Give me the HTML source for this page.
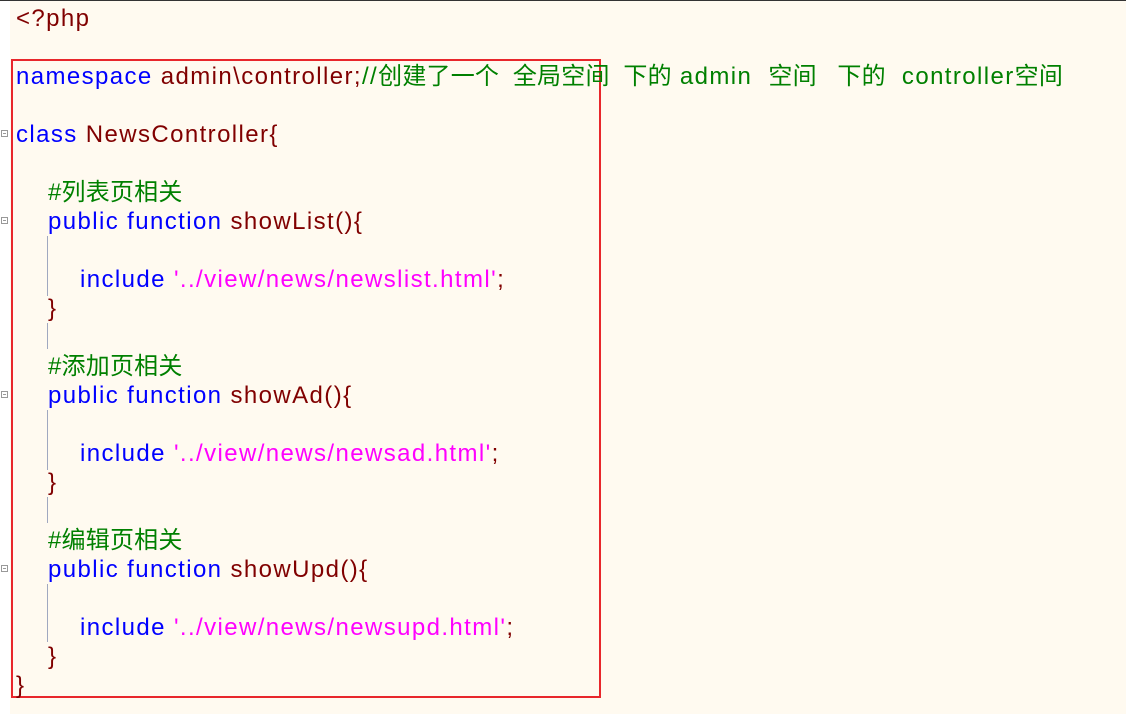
<!DOCTYPE html>
<html><head><meta charset="utf-8"><style>
body{margin:0;width:1126px;height:714px;overflow:hidden;background:#fffaf0;position:relative;font-family:"Liberation Sans","Noto Sans CJK SC",sans-serif;font-size:24px}
.g{position:absolute;left:0;top:0;width:10px;height:714px;background:#fff}
.top{position:absolute;left:0;top:0;width:1126px;height:1px;background:#333}
.l{position:absolute;left:16px;height:29px;line-height:29px;white-space:pre;letter-spacing:1.4px}
.z{letter-spacing:0.2px}
.k{color:#0000ff}.d{color:#800000}.c{color:#008000}.s{color:#ff00ff}
.box{position:absolute;left:11px;top:59px;width:586px;height:635px;border:2px solid #e8262b;box-sizing:content-box}
.v{position:absolute;left:47px;width:1px;background:#a0a8c0}
.f{position:absolute;left:1px;width:7px;height:7px;border:1px solid #999;box-sizing:border-box}
.f:after{content:"";position:absolute;left:1px;top:2px;width:3px;height:1px;background:#999}
</style></head><body>
<div class="g"></div><div class="top"></div>
<div class="box"></div>
<div class="l d" style="top:4px">&lt;?php</div>
<div class="l" style="top:62px"><span class="k">namespace</span> <span class="d">admin\controller;</span><span class="c">//<span class="z">创建了一个  全局空间  下的</span> admin  <span class="z">空间   下的</span>  controller<span class="z">空间</span></span></div>
<div class="l" style="top:120px"><span class="k">class</span> <span class="d">NewsController{</span></div>
<div class="l c z" style="top:178px;left:48px">#列表页相关</div>
<div class="l" style="top:207px;left:48px"><span class="k">public function</span> <span class="d">showList(){</span></div>
<div class="l" style="top:265px;left:80px"><span class="k">include</span> <span class="s">'../view/news/newslist.html'</span><span class="d">;</span></div>
<div class="l d" style="top:294px;left:48px">}</div>
<div class="l c z" style="top:352px;left:48px">#添加页相关</div>
<div class="l" style="top:381px;left:48px"><span class="k">public function</span> <span class="d">showAd(){</span></div>
<div class="l" style="top:439px;left:80px"><span class="k">include</span> <span class="s">'../view/news/newsad.html'</span><span class="d">;</span></div>
<div class="l d" style="top:468px;left:48px">}</div>
<div class="l c z" style="top:526px;left:48px">#编辑页相关</div>
<div class="l" style="top:555px;left:48px"><span class="k">public function</span> <span class="d">showUpd(){</span></div>
<div class="l" style="top:613px;left:80px"><span class="k">include</span> <span class="s">'../view/news/newsupd.html'</span><span class="d">;</span></div>
<div class="l d" style="top:642px;left:48px">}</div>
<div class="l d" style="top:671px">}</div>
<div class="v" style="top:236px;height:60px"></div>
<div class="v" style="top:323px;height:26px"></div>
<div class="v" style="top:410px;height:60px"></div>
<div class="v" style="top:497px;height:26px"></div>
<div class="v" style="top:584px;height:58px"></div>
<div class="f" style="top:130px"></div>
<div class="f" style="top:217px"></div>
<div class="f" style="top:391px"></div>
<div class="f" style="top:565px"></div>
</body></html>
